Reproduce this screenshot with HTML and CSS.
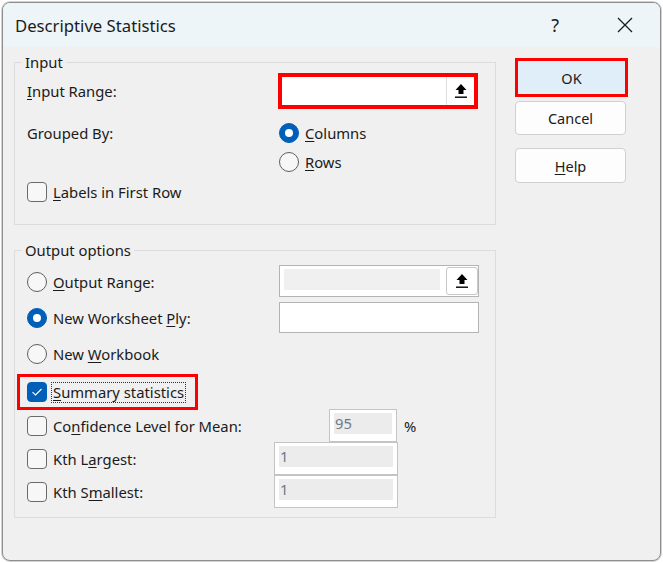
FILE: index.html
```html
<!DOCTYPE html>
<html lang="en">
<head>
    <meta charset="UTF-8">
    <title>Descriptive Statistics</title>
    <link rel="stylesheet" href="styles.css">
</head>
<body>
    <div class="window">
        <div class="titlebar">
            <span class="title">Descriptive Statistics</span>
            <span class="help-mark">?</span>
            <svg class="close" width="16" height="16" viewBox="0 0 16 16">
                <path d="M1 1L15 15M15 1L1 15" stroke="#1b1b1b" stroke-width="1.3" fill="none"/>
            </svg>
        </div>

        <div class="dialog">
            <div class="groups">
                <!-- Input -->
                <div class="group group-input">
                    <span class="group-label">Input</span>
                    <div class="row row-range">
                        <span class="choice"><span><u>I</u>nput Range:</span></span>
                        <div class="ref-field ref-field-marked">
                            <span class="ref-blank"></span>
                            <span class="ref-btn ref-btn-flat">
                                <svg width="12" height="16" viewBox="0 0 12 16"><path d="M6 1L0.5 7H3.5V11H8.5V7H11.5Z" fill="#000"/><rect x="0" y="13.5" width="12" height="1.4" fill="#000"/></svg>
                            </span>
                        </div>
                    </div>
                    <div class="row row-grouped">
                        <span class="choice"><span>Grouped By:</span></span>
                        <span class="opt"><span class="radio checked"></span><span><u>C</u>olumns</span></span>
                    </div>
                    <div class="row row-rows">
                        <span class="choice"></span>
                        <span class="opt"><span class="radio"></span><span><u>R</u>ows</span></span>
                    </div>
                    <div class="row row-labels">
                        <span class="opt"><span class="check"></span><span><u>L</u>abels in First Row</span></span>
                    </div>
                </div>

                <!-- Output options -->
                <div class="group group-output">
                    <span class="group-label">Output options</span>
                    <div class="row row-out">
                        <span class="choice choice-low"><span class="opt"><span class="radio"></span><span><u>O</u>utput Range:</span></span></span>
                        <div class="ref-field">
                            <span class="ref-gray"></span>
                            <span class="ref-btn">
                                <svg width="12" height="16" viewBox="0 0 12 16"><path d="M6 1L0.5 7H3.5V11H8.5V7H11.5Z" fill="#000"/><rect x="0" y="13.5" width="12" height="1.4" fill="#000"/></svg>
                            </span>
                        </div>
                    </div>
                    <div class="row row-ply">
                        <span class="choice"><span class="opt"><span class="radio checked"></span><span>New Worksheet <u>P</u>ly:</span></span></span>
                        <div class="text-field"></div>
                    </div>
                    <div class="row row-book">
                        <span class="opt"><span class="radio"></span><span>New <u>W</u>orkbook</span></span>
                    </div>
                    <div class="row row-summary">
                        <span class="marked">
                            <span class="opt opt-focus">
                                <span class="check checked">
                                    <svg width="12" height="10" viewBox="0 0 12 10"><path d="M1.5 5.2L4.5 8L10.5 2" stroke="#fff" stroke-width="1.1" fill="none"/></svg>
                                </span>
                                <span class="focus"><u>S</u>ummary statistics</span>
                            </span>
                        </span>
                    </div>
                    <div class="row row-conf">
                        <span class="choice"><span class="opt"><span class="check"></span><span>Co<u>n</u>fidence Level for Mean:</span></span></span>
                        <div class="num-field num-field-conf"><span class="num-inner">95</span></div>
                        <span class="percent">%</span>
                    </div>
                    <div class="row row-kth">
                        <span class="choice"><span class="opt"><span class="check"></span><span>Kth L<u>a</u>rgest:</span></span></span>
                        <div class="num-field num-field-kth"><span class="num-inner">1</span></div>
                    </div>
                    <div class="row row-kth">
                        <span class="choice"><span class="opt"><span class="check"></span><span>Kth S<u>m</u>allest:</span></span></span>
                        <div class="num-field num-field-kth"><span class="num-inner">1</span></div>
                    </div>
                </div>
            </div>

            <div class="buttons">
                <button class="btn btn-ok">OK</button>
                <button class="btn btn-cancel">Cancel</button>
                <button class="btn btn-help"><u>H</u>elp</button>
            </div>
        </div>
    </div>
</body>
</html>
```

FILE: styles.css
```css
* {
    box-sizing: border-box;
}
body {
    margin: 0;
    background-color: #ffffff;
    font-family: "Noto Sans", "Open Sans", sans-serif;
    font-size: 14.8px;
    color: #1b1b1b;
}
u {
    text-decoration-thickness: 1px;
    text-underline-offset: 2px;
}
.window {
    margin: 2px;
    width: 659px;
    height: 559px;
    border: 1px solid #8e8e8e;
    border-radius: 8px;
    background-color: #f0f0f0;
    overflow: hidden;
    box-shadow: 0 0 0 1px #d4d4d4;
}
.titlebar {
    height: 44px;
    background-color: #eef5f8;
    display: flex;
    align-items: center;
    padding-left: 12px;
}
.title {
    flex: 1;
    font-size: 16.7px;
}
.help-mark {
    font-size: 18px;
    margin-right: 58px;
}
.close {
    margin-right: 27px;
}
.dialog {
    display: flex;
    gap: 19px;
    padding: 11px 0 0 11px;
}
.groups {
    width: 482px;
    margin-top: 4px;
}
.group {
    position: relative;
    border: 1px solid #dcdcdc;
    padding: 0 12px;
}
.group-label {
    position: absolute;
    top: -10px;
    left: 7px;
    padding: 0 3px;
    line-height: 18px;
    background-color: #f0f0f0;
}
.group-input {
    padding-top: 10px;
    padding-bottom: 16px;
}
.group-output {
    margin-top: 25px;
    padding-top: 14px;
    padding-bottom: 9px;
}
.row {
    display: flex;
    align-items: center;
}
.choice {
    width: 252px;
    flex: none;
    display: flex;
    align-items: center;
}
.choice-low {
    padding-top: 7px;
}
.opt {
    display: flex;
    align-items: center;
    gap: 6px;
}
.radio {
    width: 20px;
    height: 20px;
    flex: none;
    border-radius: 50%;
    border: 1px solid #5f5f5f;
    background-color: #f7f7f7;
    display: flex;
    align-items: center;
    justify-content: center;
}
.radio.checked {
    background-color: #005fb8;
    border-color: #005fb8;
}
.radio.checked::after {
    content: "";
    width: 8px;
    height: 8px;
    border-radius: 50%;
    background-color: #ffffff;
}
.check {
    width: 20px;
    height: 20px;
    flex: none;
    border: 1px solid #6a6a6a;
    border-radius: 4px;
    background-color: #f7f7f7;
    display: flex;
    align-items: center;
    justify-content: center;
}
.check.checked {
    background-color: #005fb8;
    border-color: #005fb8;
}

/* input group rows */
.row-range {
    height: 36px;
}
.row-grouped {
    margin-top: 9px;
    height: 30px;
}
.row-rows {
    height: 28px;
}
.row-labels {
    height: 32px;
}

/* output group rows */
.row-out {
    height: 32px;
    align-items: flex-start;
}
.row-ply {
    margin-top: 5px;
    height: 31px;
}
.row-book {
    margin-top: 5px;
    height: 32px;
}
.row-summary {
    margin-top: 3px;
    height: 37px;
}
.row-conf {
    margin-top: -1px;
    height: 33px;
}
.row-kth {
    height: 33px;
}

/* reference / edit fields */
.ref-field {
    width: 200px;
    height: 32px;
    display: flex;
    background-color: #ffffff;
    border: 1px solid #b4b4b4;
}
.ref-field-marked {
    height: 36px;
    margin-left: -1px;
    border: 4px solid #ff0000;
}
.ref-blank {
    flex: 1;
}
.ref-gray {
    flex: 1;
    height: 21px;
    margin: 3px 6px 0 4px;
    background-color: #f0f0f0;
}
.ref-btn {
    width: 32px;
    margin: 1px 0 1px 0;
    border: 1px solid #c8c8c8;
    border-radius: 3px;
    background-color: #ffffff;
    display: flex;
    align-items: center;
    justify-content: center;
}
.ref-btn-flat {
    width: 28px;
    margin: 0;
    border: none;
    border-left: 1px solid #dedede;
    border-radius: 0;
}
.text-field {
    width: 200px;
    height: 31px;
    background-color: #ffffff;
    border: 1px solid #b4b4b4;
}
.num-field {
    height: 33px;
    padding: 3px 4px 8px 4px;
    background-color: #ffffff;
    border: 1px solid #c4c4c4;
}
.num-field-conf {
    width: 68px;
    margin-left: 50px;
}
.num-field-kth {
    width: 124px;
    margin-left: -5px;
}
.num-inner {
    display: block;
    height: 21px;
    line-height: 21px;
    padding-left: 1px;
    background-color: #ececec;
    color: #6c7a88;
}
.percent {
    margin-left: 7px;
}

/* summary statistics, highlighted */
.marked {
    margin-left: -10px;
    padding: 5px 9px 4px 7px;
    border: 3px solid #ff0000;
}
.opt-focus {
    gap: 4px;
}
.focus {
    border: 1px dotted #333333;
    padding: 0 1px;
    line-height: 19px;
}

/* buttons */
.buttons {
    width: 112px;
    display: flex;
    flex-direction: column;
}
.btn {
    font-family: inherit;
    font-size: 14.5px;
    color: #1b1b1b;
    width: 111px;
    border: 1px solid #d0d0d0;
    border-radius: 4px;
    background-color: #fdfdfd;
    padding: 0;
}
.btn-ok {
    width: 113px;
    height: 39px;
    border: 3px solid #ff0000;
    border-radius: 0;
    background-color: #e0eef9;
}
.btn-cancel {
    margin-top: 4px;
    height: 34px;
}
.btn-help {
    margin-top: 13px;
    height: 35px;
}
```
